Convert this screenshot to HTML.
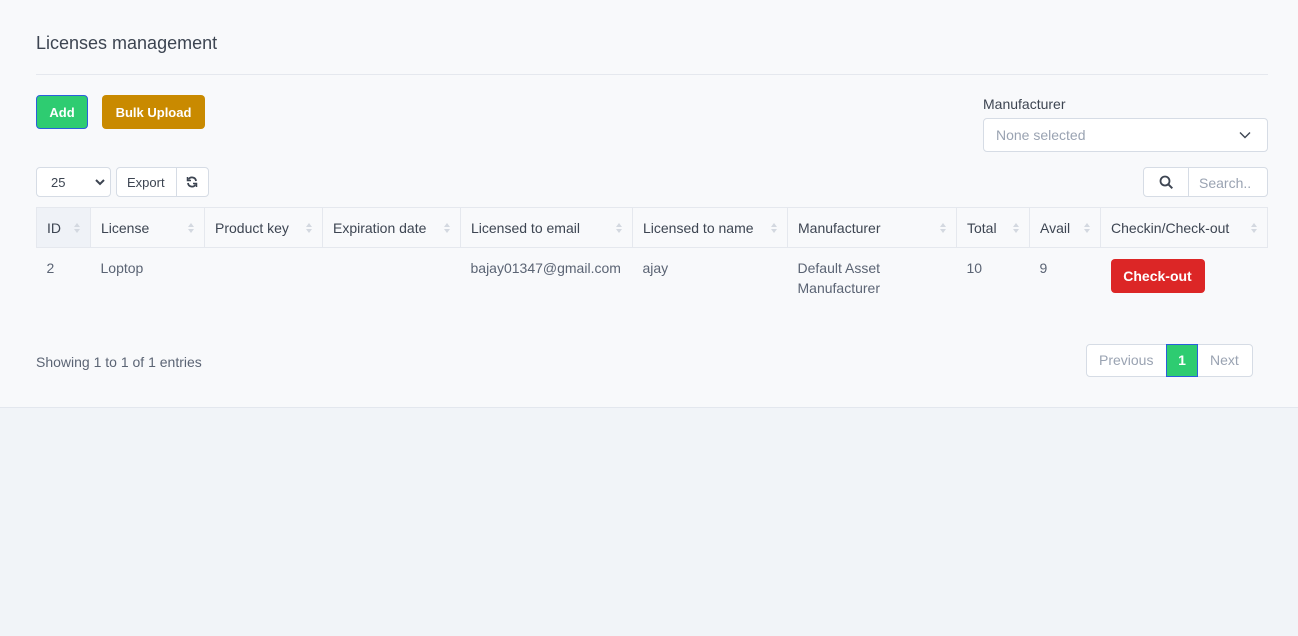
<!DOCTYPE html>
<html><head><meta charset="utf-8"><style>
*{box-sizing:border-box;margin:0;padding:0}
body{width:1298px;height:636px;background:#f1f4f8;font-family:"Liberation Sans",sans-serif;font-size:14px;color:#3d4552;position:relative;overflow:hidden}
.card{position:absolute;left:0;top:0;width:1298px;height:408px;background:#f8f9fb;border-bottom:1px solid #e3e7ee}
.a{position:absolute}
.btn{position:absolute;color:#fff;font-weight:bold;font-size:13px;border-radius:4px;display:flex;align-items:center;justify-content:center}
.box{position:absolute;background:#fff;border:1px solid #d6dce5;border-radius:4px}
table{position:absolute;left:36px;top:207px;width:1232px;border-collapse:collapse}
th{height:40px;border:1px solid #e5e8ee;text-align:left;font-weight:normal;padding:0 10px;position:relative;font-size:14px;color:#3d4552}
th::after{content:"";position:absolute;right:10px;top:15px;width:0;height:0;border-left:3px solid transparent;border-right:3px solid transparent;border-bottom:4px solid #d3d8e0;box-shadow:none}
th::before{content:"";position:absolute;right:10px;top:21px;width:0;height:0;border-left:3px solid transparent;border-right:3px solid transparent;border-top:4px solid #d3d8e0}
td{vertical-align:top;padding:10px 10px 0;line-height:20px;color:#5b6474;height:60px}
</style></head><body>
<div class="card">
<div class="a" style="left:36px;top:33px;font-size:18px;color:#3d4552">Licenses management</div>
<div class="a" style="left:36px;top:74px;width:1232px;border-top:1px solid #e5e8ee"></div>
<div class="btn" style="left:36px;top:95px;width:52px;height:34px;background:#2ecc71;border:1px solid #2b5fdb">Add</div>
<div class="btn" style="left:102px;top:95px;width:103px;height:34px;background:#c98a00">Bulk Upload</div>
<div class="a" style="left:983px;top:96px;font-size:14px;color:#3d4552">Manufacturer</div>
<div class="box" style="left:983px;top:118px;width:285px;height:34px;color:#9aa3b2;padding:8px 12px">None selected
<svg class="a" style="right:16px;top:12px" width="12" height="8" viewBox="0 0 12 8"><path d="M1 1.5l5 5 5-5" fill="none" stroke="#3d4552" stroke-width="1.4"/></svg></div>
<div class="box" style="left:36px;top:167px;width:75px;height:30px;font-size:13px;padding:7px 14px;color:#3d4552">25
<svg class="a" style="right:5px;top:11px" width="10" height="7" viewBox="0 0 10 7"><path d="M1 1l4 4 4-4" fill="none" stroke="#3d4552" stroke-width="2"/></svg></div>
<div class="box" style="left:116px;top:167px;width:93px;height:30px;font-size:13px;color:#3d4552">
<span class="a" style="left:10px;top:7px">Export</span>
<div class="a" style="left:59px;top:0;height:28px;border-left:1px solid #d6dce5"></div>
<svg class="a" style="left:69px;top:8px" width="12" height="12" viewBox="0 0 12 12"><path d="M10 5A4 4 0 0 0 2.5 3.5M2 7a4 4 0 0 0 7.5 1.5" fill="none" stroke="#3d4552" stroke-width="1.8"/><path d="M1.5 1v3.5h3.5M10.5 11V7.5H7" fill="none" stroke="#3d4552" stroke-width="1.5"/></svg></div>
<div class="box" style="left:1143px;top:167px;width:125px;height:30px;color:#9aa3b2">
<svg class="a" style="left:15px;top:7px" width="15" height="15" viewBox="0 0 15 15"><circle cx="6" cy="6" r="4.5" fill="none" stroke="#3d4552" stroke-width="1.8"/><path d="M9.3 9.3l4 4" stroke="#3d4552" stroke-width="2"/></svg>
<div class="a" style="left:44px;top:0;height:28px;border-left:1px solid #d6dce5"></div>
<span class="a" style="left:55px;top:7px">Search..</span></div>
<table>
<tr><th style="width:54px;background:#eff2f7">ID</th><th style="width:114px">License</th><th style="width:118px">Product key</th><th style="width:138px">Expiration date</th><th style="width:172px">Licensed to email</th><th style="width:155px">Licensed to name</th><th style="width:169px">Manufacturer</th><th style="width:73px">Total</th><th style="width:71px">Avail</th><th>Checkin/Check-out</th></tr>
<tr><td>2</td><td>Loptop</td><td></td><td></td><td>bajay01347@gmail.com</td><td>ajay</td><td>Default Asset<br>Manufacturer</td><td>10</td><td>9</td><td><div style="width:94px;height:34px;background:#dc2626;border-radius:4px;color:#fff;font-weight:bold;font-size:14px;display:flex;align-items:center;justify-content:center;margin-top:1px">Check-out</div></td></tr>
</table>
<div class="a" style="left:36px;top:354px;color:#5b6474">Showing 1 to 1 of 1 entries</div>
<div class="box" style="left:1086px;top:344px;width:167px;height:33px;color:#9aa3b2">
<span class="a" style="left:12px;top:7px">Previous</span>
<div class="a" style="left:79px;top:-1px;width:32px;height:33px;background:#2ecc71;border:1px solid #2b5fdb;color:#fff;font-weight:bold;text-align:center;padding-top:7px">1</div>
<span class="a" style="left:123px;top:7px">Next</span></div>
</div>
</body></html>
